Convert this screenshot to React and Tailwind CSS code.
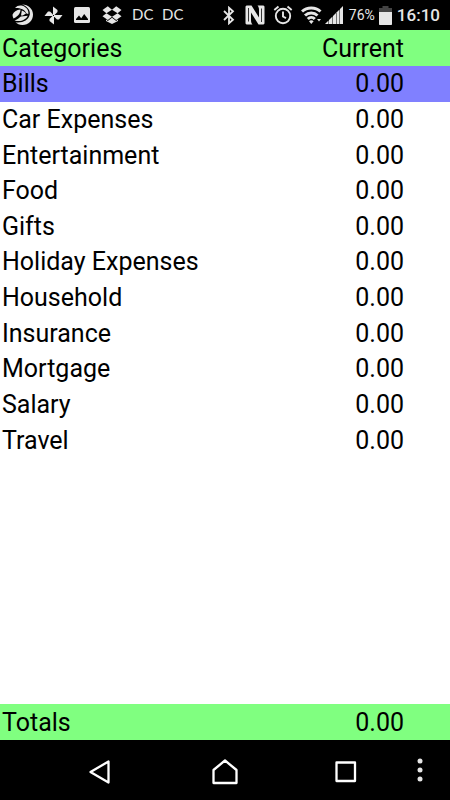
import * as React from 'react';

const categories = [
  { name: 'Bills', current: '0.00' },
  { name: 'Car Expenses', current: '0.00' },
  { name: 'Entertainment', current: '0.00' },
  { name: 'Food', current: '0.00' },
  { name: 'Gifts', current: '0.00' },
  { name: 'Holiday Expenses', current: '0.00' },
  { name: 'Household', current: '0.00' },
  { name: 'Insurance', current: '0.00' },
  { name: 'Mortgage', current: '0.00' },
  { name: 'Salary', current: '0.00' },
  { name: 'Travel', current: '0.00' },
];

function SwirlIcon() {
  return (
    <svg width="22" height="22" viewBox="0 0 22 22" fill="#e6e6e6" aria-hidden="true">
      <path d="M10 0.5C16.5 0.5 21 5 21 10.5C21 16.5 16.5 21 10.5 21C7.5 21 5 19.8 3.5 18.3C10 19.3 16.5 16.5 17.8 10.5C18.5 6.5 15.5 2.5 10 0.5Z" />
      <path d="M3 4C5 1.5 8 1 10.5 1.8C14.5 3.2 17 6.5 16.3 10L14.5 9.500C13 5.500 8 3.8 3 4Z" />
      <path d="M0.5 10.8C1.5 7.8 4.5 5.8 8.500 5.500C8.500 9.500 5.8 12.5 1.5 14.5C0.8 13.3 0.5 12 0.5 10.8Z" />
      <path d="M9.8 6.5C11.5 7 13.2 8 14 9.5L10.8 11.5H9Z" />
      <path d="M2.5 16.5C5 15.5 7.5 14 8.8 12.5L15.8 11.8C14 15.8 8.5 18.3 2.5 16.5Z" />
    </svg>
  );
}

function PinwheelIcon() {
  return (
    <svg width="19" height="19" viewBox="0 0 19 19" fill="#e6e6e6" aria-hidden="true">
      <path d="M9 9V0.5L13.5 4V6L10.5 9Z" />
      <path d="M10 9H18.5L15 13.5H13L10 10.5Z" />
      <path d="M10 10V18.5L5.5 15V13L8.5 10Z" />
      <path d="M9 10H0.5L4 5.5H6L9 8.5Z" />
    </svg>
  );
}

function PhotoIcon() {
  return (
    <svg width="16" height="16" viewBox="0 0 16 16" aria-hidden="true">
      <rect width="16" height="16" rx="1.5" fill="#e6e6e6" />
      <path d="M2 13V12L5 8.5L7.2 11.2L10.2 7L14 12V13Z" fill="#000" />
    </svg>
  );
}

function BoxIcon() {
  return (
    <svg width="20" height="18" viewBox="0 0 20 18" fill="#e6e6e6" aria-hidden="true">
      <path d="M5.8 0.3L10 3.7L4.4 7.2L0.5 4Z" />
      <path d="M14.2 0.3L10 3.7L15.6 7.2L19.5 4Z" />
      <path d="M0.5 10.3L4.4 7.2L10 10.7L5.8 14Z" />
      <path d="M19.5 10.3L15.6 7.2L10 10.7L14.2 14Z" />
      <path d="M4 13.500L5.8 15L10 11.7L14.2 15L16 13.500V15L10 18L4 15Z" />
    </svg>
  );
}

function BluetoothIcon() {
  return (
    <svg width="12" height="19" viewBox="0 0 12 19" fill="none" stroke="#e6e6e6" strokeWidth="1.8" aria-hidden="true">
      <path d="M1 5L10 13.8L6 17.3V1.7L10 5.2L1 14" />
    </svg>
  );
}

function NfcIcon() {
  return (
    <svg width="20" height="20" viewBox="0 0 20 20" aria-hidden="true">
      <path d="M0.500 1.500L1.500 0.500H6.500L14 12.500V5C14 3 13.500 1.500 12.500 0.500H18.500L19.500 1.500V18.500L18.500 19.500H13.500L6 7.500V15C6 17 6.500 18.500 7.500 19.500H1.500L0.500 18.500Z" fill="#e6e6e6" />
      <path d="M3.500 16.500V3M16.500 3.500V17" stroke="#222" strokeWidth="0.900" />
    </svg>
  );
}

function AlarmIcon() {
  return (
    <svg width="20" height="20" viewBox="0 0 20 20" fill="none" stroke="#e6e6e6" strokeWidth="1.9" aria-hidden="true">
      <circle cx="10" cy="11" r="7.2" />
      <path d="M1.3 5L5.5 1.5M18.7 5L14.5 1.5" />
      <path d="M10 6.5V11.5L13 13.2" />
    </svg>
  );
}

function WifiIcon() {
  return (
    <svg width="21" height="19" viewBox="0 0 21 19" fill="none" stroke="#e6e6e6" strokeWidth="3" aria-hidden="true">
      <path d="M1 5.5C6 0.7 14.5 0.7 19.5 5.5" />
      <path d="M4 9.5C7.5 6.2 13 6.2 16.5 9.5" />
      <path d="M6.8 13C8.8 11 11.8 11 13.8 13" />
      <path d="M8 15.2C9.2 14 11.4 14 12.6 15.2L10.3 18Z" fill="#e6e6e6" stroke="none" />
      <path d="M16 13H20L18 15.5Z" fill="#e6e6e6" stroke="none" />
    </svg>
  );
}

function SignalIcon() {
  return (
    <svg width="18" height="18" viewBox="0 0 18 18" fill="#e6e6e6" aria-hidden="true">
      <path d="M0 18L3.5 14.5V18Z" />
      <path d="M4 14L7.5 10.5V18H4Z" />
      <path d="M8 10L11 7V18H8Z" />
      <path d="M11.5 6.5L14.5 3.5V18H11.5Z" />
      <path d="M15 3L18 0V18H15Z" />
    </svg>
  );
}

function BatteryIcon() {
  return (
    <svg width="13" height="19" viewBox="0 0 13 19" aria-hidden="true">
      <path d="M3.5 0H9.5V2H13V6H0V2H3.5Z" fill="#444" />
      <path d="M0 6H13V18C13 18.6 12.6 19 12 19H1C0.4 19 0 18.6 0 18Z" fill="#e6e6e6" />
    </svg>
  );
}

function StatusBar() {
  return (
    <header className="flex h-[30px] items-center justify-between bg-black pl-3 pr-[10px] text-[#e6e6e6]">
      <div className="flex items-center gap-[10px]">
        <SwirlIcon />
        <PinwheelIcon />
        <span className="px-[1px]"><PhotoIcon /></span>
        <span className="ml-[1px]"><BoxIcon /></span>
        <span className="w-5 pb-[2px] font-['Lato',sans-serif] text-[15px] leading-5">DC</span>
        <span className="w-5 pb-[2px] font-['Lato',sans-serif] text-[15px] leading-5">DC</span>
      </div>
      <div className="flex items-center">
        <BluetoothIcon />
        <span className="ml-[10px]"><NfcIcon /></span>
        <span className="ml-2"><AlarmIcon /></span>
        <span className="ml-2"><WifiIcon /></span>
        <span className="ml-[3px]"><SignalIcon /></span>
        <span className="ml-[6px] text-sm leading-5">76%</span>
        <span className="ml-1"><BatteryIcon /></span>
        <time className="ml-[5px] text-[17px] leading-5 font-medium">16:10</time>
      </div>
    </header>
  );
}

function CategoryTable() {
  return (
    <table className="h-[428px] w-full border-collapse">
      <thead>
        <tr className="h-9 bg-[#80ff80]">
          <th scope="col" className="pl-[2px] text-left font-normal">Categories</th>
          <th scope="col" className="pr-[46px] text-right font-normal">Current</th>
        </tr>
      </thead>
      <tbody>
        {categories.map((category, index) => (
          <tr key={category.name} className={index === 0 ? 'bg-[#8080ff]' : 'bg-white'}>
            <td className="pl-[2px]">{category.name}</td>
            <td className="pr-[46px] text-right">{category.current}</td>
          </tr>
        ))}
      </tbody>
    </table>
  );
}

function NavBar() {
  return (
    <nav className="flex h-[60px] items-center bg-black pr-[22px] text-white">
      <div className="flex flex-1 items-center justify-between pt-1 pr-[53px] pl-[86px]">
        <button type="button" aria-label="Back" className="p-[2px]">
          <svg width="24" height="26" viewBox="0 0 24 26" fill="none" stroke="currentColor" strokeWidth="2.3" strokeLinejoin="round">
            <path d="M2.5 13L20.5 2.5V23.5Z" />
          </svg>
        </button>
        <button type="button" aria-label="Home" className="pl-[2px]">
          <svg width="28" height="26" viewBox="0 0 28 26" fill="none" stroke="currentColor" strokeWidth="2.3" strokeLinejoin="round">
            <path d="M2.5 11L14 1.5L25.5 11V24H2.5Z" />
          </svg>
        </button>
        <button type="button" aria-label="Recent apps" className="p-[2px]">
          <svg width="22" height="22" viewBox="0 0 22 22" fill="none" stroke="currentColor" strokeWidth="2.3" strokeLinejoin="round">
            <rect x="1.5" y="1.5" width="18.5" height="18.5" />
          </svg>
        </button>
      </div>
      <button type="button" aria-label="More options" className="px-[5px]">
        <svg width="6" height="24" viewBox="0 0 6 24" fill="#e6e6e6">
          <circle cx="3" cy="3" r="2.5" />
          <circle cx="3" cy="12" r="2.5" />
          <circle cx="3" cy="21" r="2.5" />
        </svg>
      </button>
    </nav>
  );
}

export default function App() {
  return (
    <div className="flex min-h-screen flex-col bg-white font-['Roboto',sans-serif] text-black">
      <StatusBar />
      <main className="flex flex-1 flex-col justify-between text-[25px] leading-[35px]">
        <CategoryTable />
        <div className="flex h-9 items-center justify-between bg-[#80ff80] pr-[46px] pl-[2px]">
          <span>Totals</span>
          <span>0.00</span>
        </div>
      </main>
      <NavBar />
    </div>
  );
}
